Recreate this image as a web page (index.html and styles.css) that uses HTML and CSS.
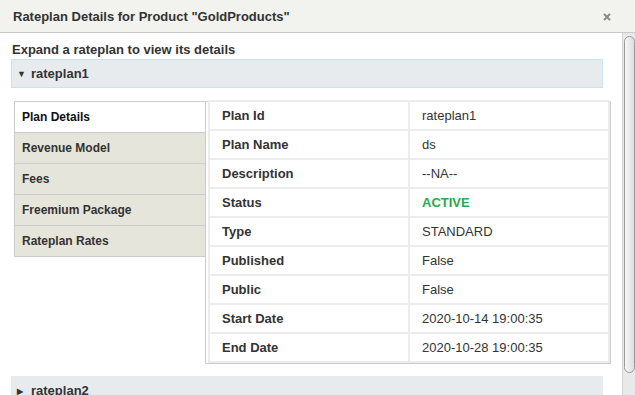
FILE: index.html
```html
<!DOCTYPE html>
<html lang="en">
<head>
    <meta charset="UTF-8">
    <title>Rateplan Details</title>
    <link rel="stylesheet" href="styles.css">
</head>
<body>
    <div class="dialog">
        <div class="dialog-head">
            <span class="dialog-title">Rateplan Details for Product "GoldProducts"</span>
            <svg class="close" width="8" height="8" viewBox="0 0 8 8">
                <path d="M1 1 L7 7 M7 1 L1 7" stroke="#8a8a8a" stroke-width="2" />
            </svg>
        </div>
        <div class="dialog-body">
            <div class="body-content">
                <h3 class="intro">Expand a rateplan to view its details</h3>

                <div class="acc-head open"><span class="caret">&#9660;</span>rateplan1</div>
                <div class="acc-panel">
                    <ul class="tabs">
                        <li class="active">Plan Details</li>
                        <li>Revenue Model</li>
                        <li>Fees</li>
                        <li>Freemium Package</li>
                        <li>Rateplan Rates</li>
                    </ul>
                    <div class="table-wrap">
                        <table class="details">
                            <tr><td class="lbl">Plan Id</td><td>rateplan1</td></tr>
                            <tr><td class="lbl">Plan Name</td><td>ds</td></tr>
                            <tr><td class="lbl">Description</td><td>--NA--</td></tr>
                            <tr><td class="lbl">Status</td><td class="status">ACTIVE</td></tr>
                            <tr><td class="lbl">Type</td><td>STANDARD</td></tr>
                            <tr><td class="lbl">Published</td><td>False</td></tr>
                            <tr><td class="lbl">Public</td><td>False</td></tr>
                            <tr><td class="lbl">Start Date</td><td>2020-10-14 19:00:35</td></tr>
                            <tr><td class="lbl">End Date</td><td>2020-10-28 19:00:35</td></tr>
                        </table>
                    </div>
                </div>

                <div class="acc-head"><span class="caret small">&#9654;</span>rateplan2</div>
            </div>
            <div class="scrollbar"><div class="thumb"></div></div>
        </div>
    </div>
</body>
</html>
```

FILE: styles.css
```css
body {
    margin: 0;
    height: 395px;
    overflow: hidden;
    background-color: #fff;
    font-family: "Liberation Sans", Arial, sans-serif;
    color: #333;
}

.dialog-head {
    height: 32px;
    display: flex;
    align-items: center;
    justify-content: space-between;
    padding: 0 24px 0 13px;
    background-color: #f2f2ee;
    border-bottom: 1px solid #c9c9c6;
}

.dialog-title {
    font-size: 13px;
    font-weight: bold;
    color: #333;
}

.close {
    display: block;
    margin-top: 1px;
}

.dialog-body {
    display: flex;
    height: 362px;
}

.body-content {
    flex: 1;
    padding: 0 19px 0 11px;
    overflow: hidden;
}

.intro {
    margin: 9px 0 2px 1px;
    font-size: 13px;
    line-height: 15px;
    font-weight: bold;
}

.acc-head {
    height: 27px;
    line-height: 27px;
    padding-left: 5px;
    background-color: #e8ebee;
    border: 1px solid #e8ebee;
    font-size: 13px;
    font-weight: bold;
}

.acc-head.open {
    border-color: #cbe3ea;
}

.caret {
    display: inline-block;
    width: 14px;
    font-size: 9px;
    vertical-align: 1px;
}

.caret.small {
    font-size: 8px;
}

.acc-panel {
    display: flex;
    align-items: flex-start;
    padding: 13px 0 12px 3px;
}

.tabs {
    flex-shrink: 0;
    list-style: none;
    margin: 0;
    padding: 0;
    width: 190px;
    border: 1px solid #ccc;
    background-color: #e6e5dc;
}

.tabs li {
    height: 30px;
    line-height: 30px;
    padding-left: 7px;
    font-size: 12px;
    font-weight: bold;
    color: #333;
}

.tabs li + li {
    border-top: 1px solid #ccc;
}

.tabs li.active {
    background-color: #fff;
    color: #111;
}

.table-wrap {
    flex-shrink: 0;
    margin-left: -1px;
    padding-left: 2px;
    border: 1px solid #ccc;
    background-color: #fff;
}

.details {
    width: 402px;
    margin-top: -2px;
    border-collapse: separate;
    border-spacing: 2px;
    background-color: #ececec;
    font-size: 13px;
}

.details td {
    height: 27px;
    padding: 0 12px;
    background-color: #fff;
    width: 50%;
}

.details td.lbl {
    font-weight: bold;
}

.details td.status {
    color: #2aa84a;
    font-weight: bold;
}

.scrollbar {
    width: 12px;
    background-color: #e9e9e9;
    border-left: 1px solid #d2d2d2;
}

.thumb {
    height: 335px;
    margin: 3px 0 0 1px;
    border: 1px solid #9a9a9a;
    border-radius: 6px;
    background: linear-gradient(to right, #f6f6f6, #dedede);
}
```
